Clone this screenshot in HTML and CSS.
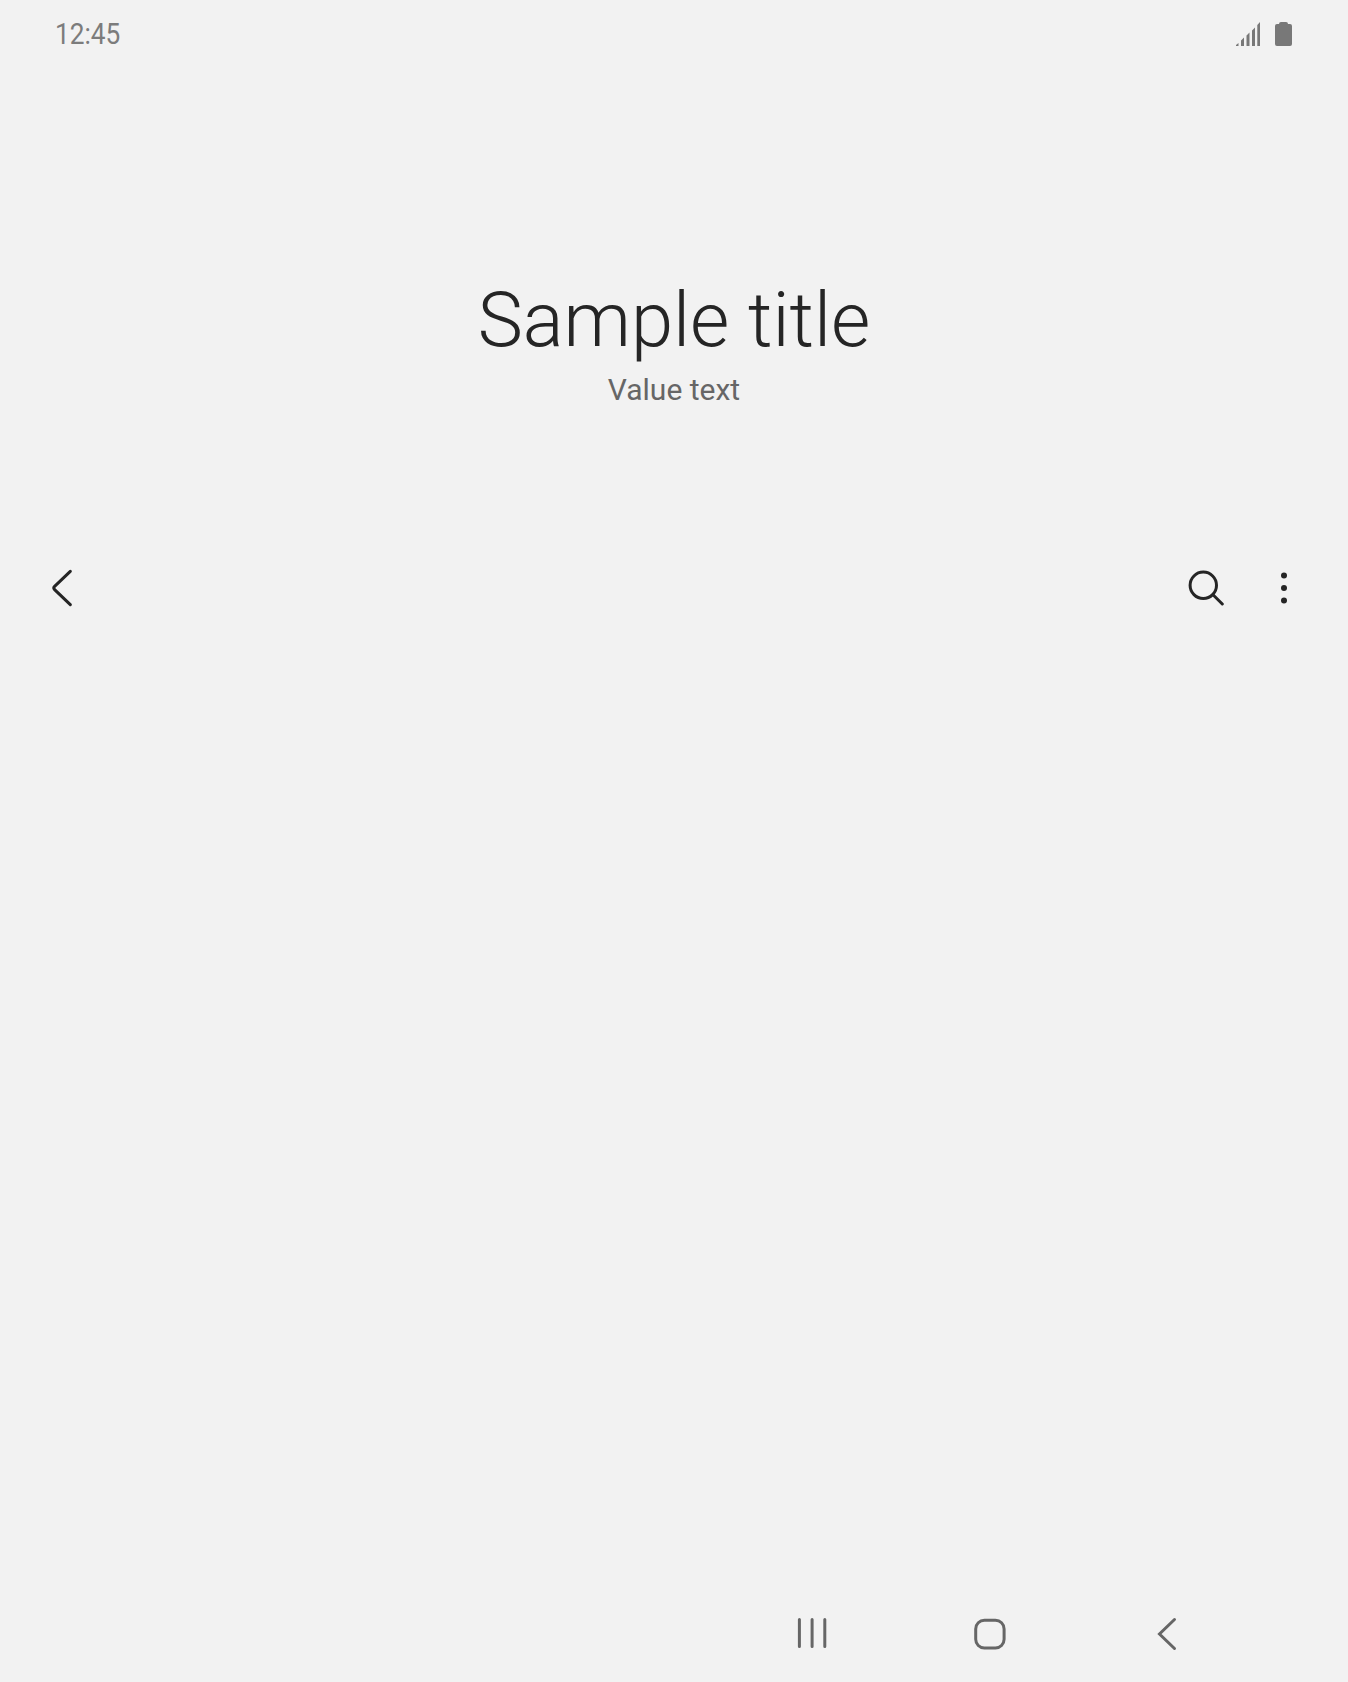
FILE: index.html
```html
<!DOCTYPE html>
<html lang="en">
<head>
<meta charset="utf-8">
<title>Sample title</title>
<link rel="stylesheet" href="styles.css">
</head>
<body>
<div class="screen">
  <header class="status">
    <span class="clock">12:45</span>
    <div class="indicators">
      <svg class="signal" viewBox="0 0 24 24"><path d="M0 24V23L2.5 21V24ZM5 24V18.5L8 15.5V24ZM10.5 24V13.5L13.5 10.5V24ZM16 24V8.5L19 5.5V24ZM21.3 24V3L24 0V24Z"/></svg>
      <svg class="battery" viewBox="0 0 17 24"><path d="M4 2Q4 0 6 0H11Q13 0 13 2H15Q17 2 17 4V22Q17 24 15 24H2Q0 24 0 22V4Q0 2 2 2Z"/></svg>
    </div>
  </header>
  <section class="heading">
    <h1 class="title">Sample title</h1>
    <p class="subtitle">Value text</p>
  </section>
  <div class="toolbar">
    <svg class="back" viewBox="0 0 20 38"><path d="M18.3 2.3L2.6 17.4Q1 19 2.6 20.6L18.3 35.7"/></svg>
    <div class="actions">
      <svg class="search" viewBox="0 0 36 36"><circle cx="15.3" cy="15.3" r="13.2"/><path d="M25 24.8L34.3 34"/></svg>
      <svg class="more" viewBox="0 0 6 32"><circle cx="3" cy="3.5" r="3"/><circle cx="3" cy="16" r="3"/><circle cx="3" cy="28.5" r="3"/></svg>
    </div>
  </div>
  <main class="content"></main>
  <nav class="nav">
    <svg class="nav-icon" viewBox="0 0 60 60"><path d="M14.4 14.5V41.5M27.1 14.5V41.5M39.8 14.5V41.5"/></svg>
    <svg class="nav-icon" viewBox="0 0 60 60"><rect x="15.7" y="15.2" width="28.4" height="27.8" rx="8.7"/></svg>
    <svg class="nav-icon nav-back" viewBox="0 0 60 60"><path d="M29.5 14.5L14.5 29L29.5 43.5"/></svg>
  </nav>
</div>
</body>
</html>
```
FILE: styles.css
```css
body {
  margin: 0;
  background: #f2f2f2;
  font-family: Roboto, "Liberation Sans", sans-serif;
}

.screen {
  display: flex;
  flex-direction: column;
  height: 1682px;
}

.status {
  display: flex;
  align-items: center;
  justify-content: space-between;
  height: 68px;
  padding: 0 56px 0 55px;
}

.clock {
  color: #7c7c7c;
  font-size: 30px;
  line-height: 68px;
  transform: scaleX(0.875);
  transform-origin: left;
}

.indicators {
  display: flex;
  gap: 15px;
  fill: #787878;
}

.signal {
  width: 24px;
  height: 24px;
}

.battery {
  width: 17px;
  height: 24px;
}

.heading {
  height: 452px;
  padding-top: 207px;
  box-sizing: border-box;
  text-align: center;
}

.title {
  margin: 0;
  color: #252525;
  font-size: 76px;
  font-weight: 300;
  line-height: 90px;
}

.subtitle {
  margin: 7px 0 0;
  color: #666;
  font-size: 30px;
  line-height: 36px;
}

.toolbar {
  display: flex;
  align-items: center;
  justify-content: space-between;
  height: 136px;
  padding: 0 61px 0 52px;
  fill: none;
  stroke: #252525;
  stroke-width: 3;
  stroke-linecap: round;
}

.back {
  width: 20px;
  height: 38px;
}

.actions {
  display: flex;
  align-items: center;
  gap: 57px;
}

.search {
  width: 36px;
  height: 36px;
}

.more {
  width: 6px;
  height: 32px;
  fill: #252525;
  stroke: none;
}

.content {
  flex: 1;
}

.nav {
  display: flex;
  align-items: center;
  gap: 115px;
  height: 94px;
  padding-left: 785px;
  fill: none;
  stroke: #666;
  stroke-width: 3;
  stroke-linecap: round;
}

.nav-icon {
  width: 60px;
  height: 60px;
}

.nav-back {
  margin-left: 10px;
}
```
